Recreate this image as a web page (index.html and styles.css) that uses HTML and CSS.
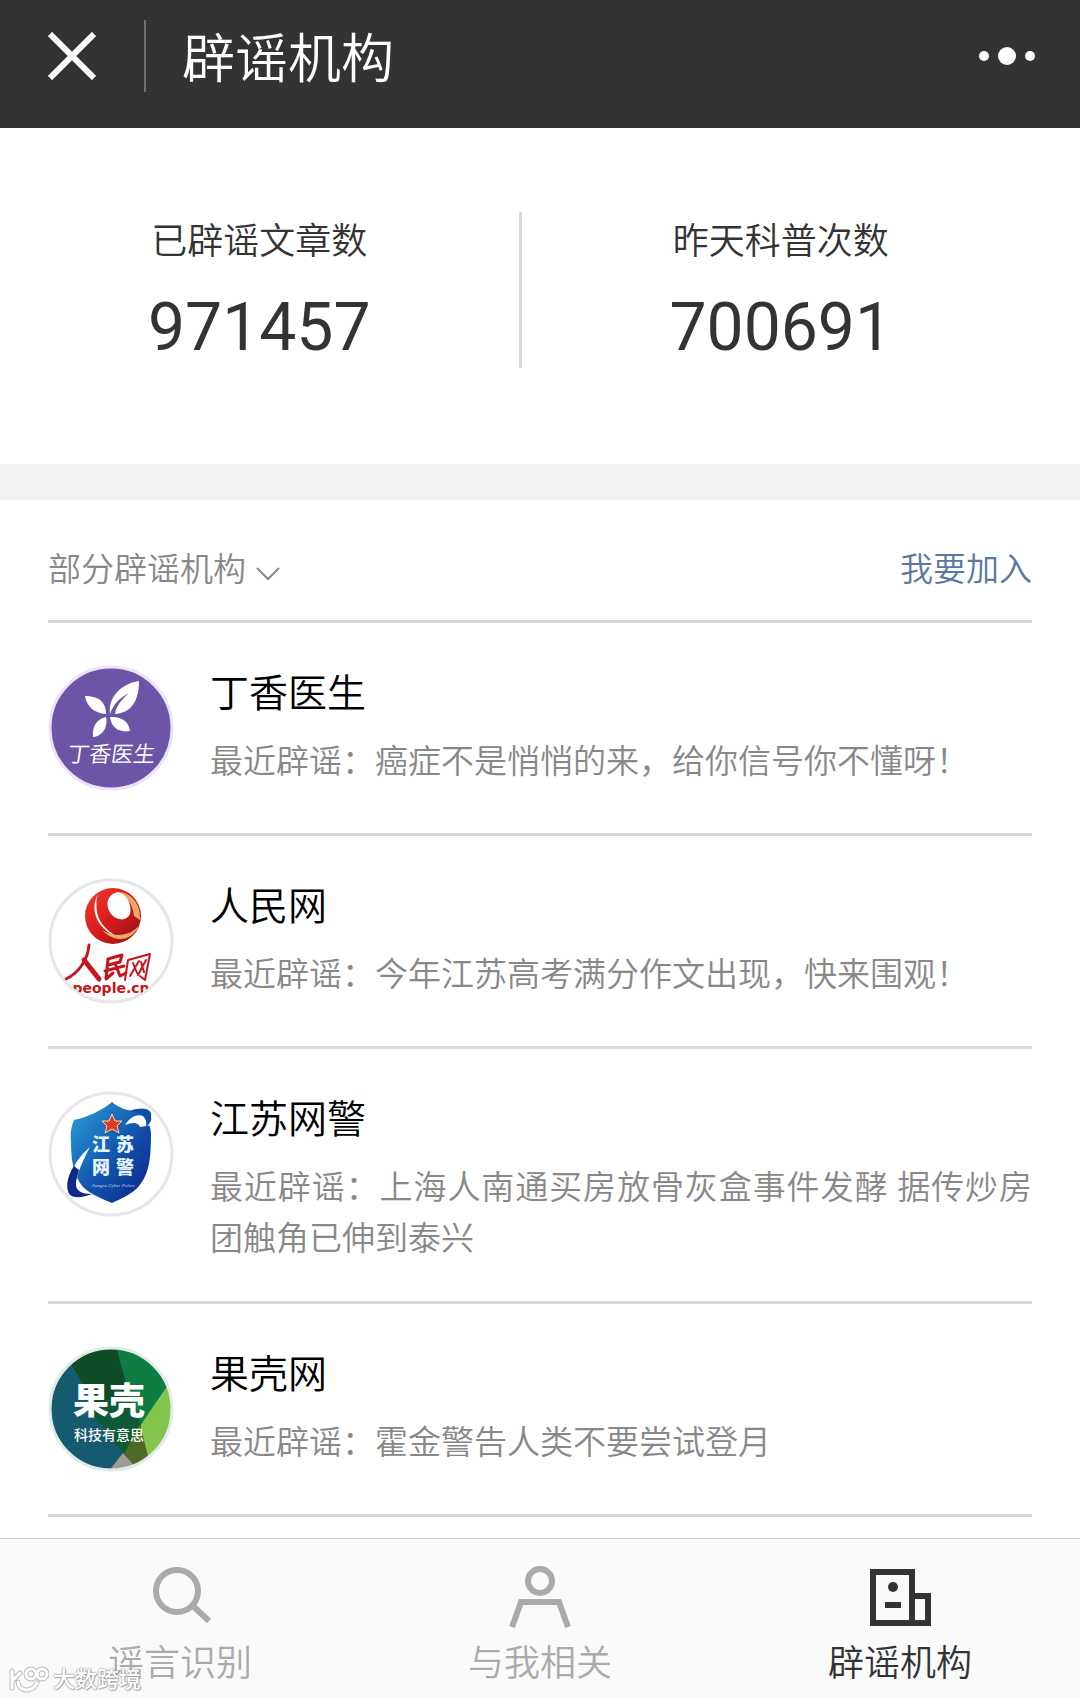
FILE: index.html
```
<!DOCTYPE html>
<html lang="zh-CN">
<head>
    <meta charset="UTF-8">
    <meta name="viewport" content="width=device-width, initial-scale=1.0">
    <title>辟谣机构</title>
    <link rel="stylesheet" href="styles.css">
</head>
<body>
    <header class="navbar">
        <button class="icon-btn close-btn" type="button" aria-label="关闭">
            <svg width="48" height="48" viewBox="0 0 48 48"><path d="M2 2L46 46M46 2L2 46" stroke="#fff" stroke-width="6"/></svg>
        </button>
        <h1 class="navbar-title">辟谣机构</h1>
        <button class="icon-btn more-btn" type="button" aria-label="更多">
            <svg width="56" height="18" viewBox="0 0 56 18" fill="#fff"><circle cx="5" cy="9" r="5"/><circle cx="28" cy="9" r="9"/><circle cx="51" cy="9" r="5"/></svg>
        </button>
    </header>

    <section class="stats">
        <div class="stat">
            <div class="stat-label">已辟谣文章数</div>
            <div class="stat-num">971457</div>
        </div>
        <div class="stat">
            <div class="stat-label">昨天科普次数</div>
            <div class="stat-num">700691</div>
        </div>
    </section>

    <main class="orgs">
        <div class="orgs-head">
            <button class="filter-btn" type="button">部分辟谣机构
                <svg width="24" height="16" viewBox="0 0 24 16"><path d="M1 2L12 13L23 2" fill="none" stroke="#888" stroke-width="2"/></svg>
            </button>
            <a class="join-link" href="#">我要加入</a>
        </div>

        <ul class="org-list">
            <li class="org">
                <svg class="avatar" viewBox="0 0 126 126">
                    <circle cx="63" cy="63" r="61" fill="#6c55a6" stroke="#e9e3f5" stroke-width="3"/>
                    <g fill="#fff">
                        <path d="M62 49C60 33 72 19 91 16C91 36 83 48 67 49C68 41 74 34 81 28C71 33 65 40 62 49Z"/>
                        <path d="M37 31C51 31 58 37 58 49C46 48 39 42 37 31Z"/>
                        <path d="M58 52C60 60 56 71 45 72C44 61 49 54 58 52Z"/>
                        <path d="M62 52C74 51 81 57 82 66C71 68 63 62 62 52Z"/>
                    </g>
                    <text class="dx-name" transform="skewX(-8)" x="76" y="97" text-anchor="middle">丁香医生</text>
                </svg>
                <div class="org-body">
                    <h2 class="org-name">丁香医生</h2>
                    <p class="org-desc">最近辟谣：癌症不是悄悄的来，给你信号你不懂呀！</p>
                </div>
            </li>
            <li class="org">
                <svg class="avatar" viewBox="0 0 126 126">
                    <defs>
                        <clipPath id="round"><circle cx="63" cy="63" r="60"/></clipPath>
                        <linearGradient id="red" x1="0" y1="0" x2="1" y2="1"><stop offset="0" stop-color="#f0402a"/><stop offset=".5" stop-color="#d91a1c"/><stop offset="1" stop-color="#8e1216"/></linearGradient>
                    </defs>
                    <circle cx="63" cy="63" r="61" fill="#fff" stroke="#e6e6e8" stroke-width="3"/>
                    <circle cx="65" cy="38" r="28" fill="url(#red)"/>
                    <path d="M72 14C84 16 93 26 92 42L86 38C85 28 80 19 72 14Z" fill="#e8ab62"/>
                    <path d="M70 14C59 16 56 28 64 37C70 43 79 43 82 36C84 26 79 16 70 14Z" fill="#fff"/>
                    <path d="M50 16C41 32 49 53 74 61C61 55 51 46 49 34C48 27 48 21 50 16Z" fill="#fff"/>
                    <path d="M54 52C67 60 81 58 91 48C84 63 67 66 54 52Z" fill="#e8ab62"/>
                    <g clip-path="url(#round)">
                        <g fill="none" stroke="#c5161c" stroke-linecap="round" stroke-linejoin="round">
                            <path d="M41 67C40 81 31 95 18 101" stroke-width="3"/>
                            <path d="M36 82L51 101" stroke-width="5"/>
                            <path d="M60 81L74 77L72 84L60 87M60 81L58 101L65 95M57 93L76 88M67 85L72 98L78 95" stroke-width="3"/>
                            <path d="M80 82L77 102M80 82L102 76L97 102L92 98M85 85L89 95M91 83L82 98M93 84L96 94M98 82L90 97" stroke-width="2"/>
                        </g>
                        <text class="people-url" x="63" y="115" text-anchor="middle">people.cn</text>
                    </g>
                </svg>
                <div class="org-body">
                    <h2 class="org-name">人民网</h2>
                    <p class="org-desc">最近辟谣：今年江苏高考满分作文出现，快来围观！</p>
                </div>
            </li>
            <li class="org">
                <svg class="avatar" viewBox="0 0 126 126">
                    <defs>
                        <linearGradient id="blue" x1="0" y1="0" x2="1" y2="1"><stop offset="0" stop-color="#2aa3d8"/><stop offset=".5" stop-color="#1459b0"/><stop offset="1" stop-color="#0b1f86"/></linearGradient>
                    </defs>
                    <circle cx="63" cy="63" r="61" fill="#fff" stroke="#e6e6ec" stroke-width="3"/>
                    <path d="M64 11C72 18 84 21 92 20C99 26 103 35 103 43C103 68 101 83 91 95C83 104 72 108 64 112C55 108 43 104 35 96C26 85 23 71 23 52C22 43 23 36 26 29C40 26 53 20 64 11Z" fill="url(#blue)"/>
                    <path d="M77 34C85 21 99 21 104 34L92 36C90 31 84 31 77 34Z" fill="#fff"/>
                    <path d="M82 20C95 15 105 18 103 26C104 29 102 33 98 36C100 26 93 22 82 20Z" fill="#0c4fa8"/>
                    <path d="M24 67C18 80 16 93 21 103C28 110 38 107 44 103C35 104 28 101 28 93C29 82 36 67 42 56C34 63 28 70 24 80Z" fill="#fff"/>
                    <path d="M26 75C19 85 17 98 22 104C28 108 36 106 44 103C34 103 27 100 28 92C28 88 30 84 31 79Z" fill="#102988"/>
                    <path d="M64 23L67 30L74 30L69 35L71 42L64 38L57 42L59 35L54 30L61 30Z" fill="#e03a22" stroke="#fbd9a0"/>
                    <g class="police-name" text-anchor="middle"><text x="53" y="60">江</text><text x="77" y="60">苏</text><text x="53" y="83">网</text><text x="77" y="83">警</text></g>
                    <text class="police-en" x="65" y="96" text-anchor="middle">Jiangsu Cyber Police</text>
                </svg>
                <div class="org-body">
                    <h2 class="org-name">江苏网警</h2>
                    <p class="org-desc">最近辟谣：上海人南通买房放骨灰盒事件发酵 据传炒房团触角已伸到泰兴</p>
                </div>
            </li>
            <li class="org">
                <svg class="avatar" viewBox="0 0 126 126">
                    <g clip-path="url(#round)">
                        <path fill="#165a70" d="M0 0H126V126H0Z"/>
                        <path fill="#0d4c25" d="M20 0H72L82 50L80 112L24 20Z"/>
                        <path fill="#0d7d43" d="M68 0H126V38L94 82L82 52Z"/>
                        <path fill="#82c44c" d="M126 30L92 80L98 126H126Z"/>
                        <path fill="#0e5a34" d="M38 60L81 48L93 80L76 108Z"/>
                        <path fill="#4d6b26" d="M92 78L76 108L88 126H104Z"/>
                        <path fill="#a09a97" d="M75 107L60 126H92Z"/>
                    </g>
                    <circle cx="63" cy="63" r="61" fill="none" stroke="#e3ebe7" stroke-width="3"/>
                    <text class="guokr-name" x="61" y="68" text-anchor="middle">果壳</text>
                    <text class="guokr-sub" x="61" y="94" text-anchor="middle">科技有意思</text>
                </svg>
                <div class="org-body">
                    <h2 class="org-name">果壳网</h2>
                    <p class="org-desc">最近辟谣：霍金警告人类不要尝试登月</p>
                </div>
            </li>
        </ul>
    </main>

    <nav class="tabbar">
        <a class="tab" href="#">
            <svg width="64" height="68" viewBox="0 0 64 68" fill="none" stroke="#aaa" stroke-width="6"><circle cx="29" cy="27" r="21"/><path d="M44 41L61 57"/></svg>
            <span>谣言识别</span>
        </a>
        <a class="tab" href="#">
            <svg width="64" height="68" viewBox="0 0 64 68" fill="none" stroke="#aaa" stroke-width="6"><circle cx="32" cy="17" r="12"/><path d="M4 63L13 38H51L60 63"/></svg>
            <span>与我相关</span>
        </a>
        <a class="tab active" href="#">
            <svg width="64" height="68" viewBox="0 0 64 68" fill="none" stroke="#333" stroke-width="6"><path d="M5 8H44V59H5ZM44 32H60V59H44"/><path d="M17 41H33"/><circle cx="25" cy="23" r="5" fill="#333" stroke="none"/></svg>
            <span>辟谣机构</span>
        </a>
    </nav>

    <div class="watermark">
        <svg width="40" height="28" viewBox="0 0 40 28" fill="none" stroke-linecap="round">
            <g stroke="#bbb" stroke-width="5"><path d="M3 5V22M3 15L11 7M9 16C10 26 23 27 28 17"/><circle cx="22" cy="8" r="5"/><circle cx="33" cy="8" r="5"/></g>
            <g stroke="#fff" stroke-width="3"><path d="M3 5V22M3 15L11 7M9 16C10 26 23 27 28 17"/><circle cx="22" cy="8" r="5"/><circle cx="33" cy="8" r="5"/></g>
        </svg>
        <span>大数跨境</span>
    </div>
</body>
</html>
```
FILE: styles.css
```
* {
    box-sizing: border-box;
}
body {
    display: flex;
    flex-direction: column;
    min-height: 100vh;
    margin: 0;
    background-color: #fff;
    color: #333;
    font-family: Roboto, "Noto Sans CJK SC", sans-serif;
    font-weight: 350;
}
h1, h2, p, ul {
    margin: 0;
    padding: 0;
    font-weight: inherit;
}
button {
    padding: 0;
    border: none;
    background: none;
    color: inherit;
    font: inherit;
    cursor: pointer;
}
a {
    text-decoration: none;
}
svg {
    display: block;
}

/* top bar */
.navbar {
    display: flex;
    align-items: center;
    height: 128px;
    padding: 0 45px 16px 48px;
    background-color: #333;
    color: #fff;
}
.navbar-title {
    margin-left: 48px;
    padding: 8px 0 0 36px;
    border-left: 2px solid #707070;
    font-size: 53px;
    line-height: 64px;
}
.more-btn {
    margin-left: auto;
}

/* counters */
.stats {
    display: flex;
    padding: 84px 40px 96px 0;
    border-bottom: 36px solid #f2f2f2;
}
.stat {
    flex: 1;
    height: 156px;
    padding-top: 2px;
    text-align: center;
}
.stat + .stat {
    border-left: 3px solid #d9d9d9;
}
.stat-label {
    font-size: 36px;
    line-height: 56px;
}
.stat-num {
    margin-top: 20px;
    font-size: 66px;
    line-height: 76px;
    font-weight: 400;
}

/* organisations */
.orgs {
    flex: 1;
    padding: 0 48px;
}
.orgs-head {
    display: flex;
    justify-content: space-between;
    align-items: center;
    padding: 44px 0 25px;
    border-bottom: 3px solid #d9d9d9;
    color: #888;
    font-size: 33px;
    line-height: 51px;
}
.filter-btn {
    display: flex;
    align-items: center;
    gap: 10px;
}
.filter-btn svg {
    margin-top: 8px;
}
.join-link {
    color: #5878a4;
}
.org-list {
    list-style: none;
}
.org {
    display: flex;
    gap: 36px;
    min-height: 213px;
    padding: 42px 0 37px;
    border-bottom: 3px solid #d9d9d9;
}
.avatar {
    flex: none;
    width: 126px;
    height: 126px;
}
.org-body {
    flex: 1;
}
.org-name {
    color: #000;
    font-size: 39px;
    line-height: 58px;
}
.org-desc {
    margin-top: 13px;
    color: #888;
    font-size: 33px;
    line-height: 51px;
    text-align: justify;
}

/* lettering inside the avatars */
.dx-name {
    fill: #fff;
    font-size: 22px;
}
.people-url {
    fill: #c5161c;
    font: bold 14px "DejaVu Sans", sans-serif;
}
.police-name {
    fill: #e4f4fc;
    font-size: 18px;
    font-weight: 900;
}
.police-en {
    fill: #c4dcf4;
    font: italic 5px "Liberation Serif", serif;
}
.guokr-name {
    fill: #fff;
    font-size: 36px;
    font-weight: 900;
}
.guokr-sub {
    fill: #fff;
    font-size: 14px;
    font-weight: 500;
}

/* bottom tabs */
.tabbar {
    position: sticky;
    bottom: 0;
    display: flex;
    height: 160px;
    border-top: 1px solid #c8c8c8;
    background-color: #fafafa;
}
.tab {
    flex: 1;
    display: flex;
    flex-direction: column;
    align-items: center;
    gap: 4px;
    padding-top: 25px;
    color: #aaa;
    font-size: 36px;
    line-height: 56px;
}
.tab.active {
    color: #333;
}

.watermark {
    position: fixed;
    left: 9px;
    bottom: 4px;
    display: flex;
    align-items: center;
    gap: 4px;
    color: #fff;
    font-size: 22px;
    font-weight: 500;
    line-height: 28px;
    text-shadow: 0 0 2px #999, 0 0 2px #999, 1px 1px 1px #bbb;
}
```
